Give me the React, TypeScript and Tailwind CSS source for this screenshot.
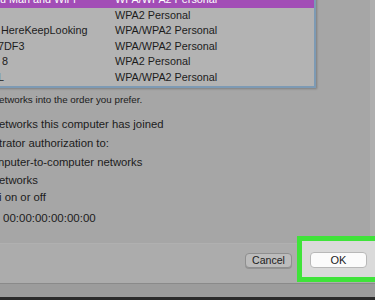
import React from "react";

type Row = { a: string; b: string; sel?: boolean; off: string };

const rows: Row[] = [
  { a: "u Man and WiFi", b: "WPA/WPA2 Personal", sel: true, off: "ml-[0px]" },
  { a: "", b: "WPA2 Personal", off: "ml-[0px]" },
  { a: "HereKeepLooking", b: "WPA/WPA2 Personal", off: "ml-[1px]" },
  { a: "7DF3", b: "WPA/WPA2 Personal", off: "ml-[-2px]" },
  { a: "8", b: "WPA2 Personal", off: "ml-[2px]" },
  { a: "L", b: "WPA/WPA2 Personal", off: "ml-[-2px]" },
];

export default function App() {
  return (
    <div className="relative w-[375px] h-[300px] overflow-hidden bg-[#a6a6a6] font-['Liberation_Sans',Arial,sans-serif] text-[#1c1c1c]">
      {/* upper content */}
      <div className="h-[243px] flex flex-col border-r-[5px] border-[#afafaf] overflow-hidden">
        {/* network list */}
        <div className="mt-[-10px] ml-[-4px] w-[320px] border-2 border-[#7d9ab4] bg-[#b3b3b3] pb-[1px] shadow-[1px_1px_2px_rgba(0,0,0,0.25)]">
          {rows.map((r, i) => (
            <div
              key={i}
              className={`flex h-[15.5px] items-center text-[10.8px] leading-[15.5px] ${
                r.sel ? "bg-[#a24db6] text-white" : ""
              }`}
            >
              <div className="w-[117px] overflow-hidden whitespace-nowrap pl-[2px]">
                <span className={`inline-block ${r.off}`}>{r.a}</span>
              </div>
              <div className="whitespace-nowrap">{r.b}</div>
            </div>
          ))}
        </div>

        {/* text lines */}
        <div className="mt-[5px] h-[14px] leading-[14px] text-[9.8px] whitespace-nowrap ml-[-1px]">
          etworks into the order you prefer.
        </div>
        <div className="mt-[8px] h-[19px] leading-[19px] text-[11.3px] whitespace-nowrap ml-[-1px]">
          etworks this computer has joined
        </div>
        <div className="h-[19px] leading-[19px] text-[11.3px] whitespace-nowrap ml-[-1px]">
          trator authorization to:
        </div>
        <div className="h-[19px] leading-[19px] text-[11.3px] whitespace-nowrap ml-[-2px]">
          nputer-to-computer networks
        </div>
        <div className="h-[17px] leading-[17px] text-[11.3px] whitespace-nowrap ml-[-1px]">
          etworks
        </div>
        <div className="h-[17px] leading-[17px] text-[11.3px] whitespace-nowrap ml-[-1px]">
          i on or off
        </div>
        <div className="mt-[3px] h-[19px] leading-[19px] text-[11.5px] whitespace-nowrap ml-[3px]">
          00:00:00:00:00:00
        </div>
      </div>

      {/* footer */}
      <div className="h-[40px] bg-[#acacac] border-t border-[#b0b0b0] flex items-start justify-end pt-[9px] pr-[8px] gap-[18px]">
        <button className="w-[47px] h-[15px] rounded-[4px] border border-[#8f8f8f] bg-[#bcbcbc] text-[10.6px] leading-[13px] text-[#1c1c1c] shadow-[0_1px_0_rgba(0,0,0,0.15)]">
          Cancel
        </button>
        <button className="w-[57px] h-[16px] rounded-[4px] border border-[#b5b5b5] bg-[#fbfbfb] text-[11px] leading-[14px] text-[#1c1c1c]">
          OK
        </button>
      </div>
      <div className="h-[1px] bg-[#8a8a8a]" />
      <div className="h-[13px] bg-[#9c9c9c]" />
      <div className="h-[3px] bg-[#2b2b2b]" />

      {/* green highlight */}
      <div className="absolute left-[297px] top-[236px] w-[90px] h-[46px] border-[5px] border-[#3fe33a] bg-[#d9d9d9]/0 pointer-events-none" />
      <div className="absolute left-[302px] top-[241px] w-[80px] h-[36px] bg-[#dadada] -z-0" />
      <button className="absolute left-[310px] top-[252px] w-[57px] h-[16px] rounded-[4px] border border-[#b8b8b8] bg-[#fbfbfb] text-[11px] leading-[14px] text-[#1c1c1c]">
        OK
      </button>
    </div>
  );
}
